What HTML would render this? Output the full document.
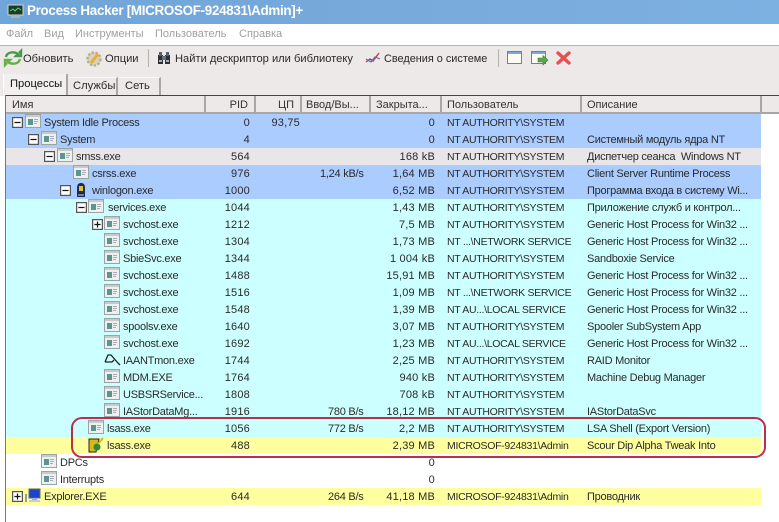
<!DOCTYPE html>
<html><head><meta charset="utf-8">
<style>
html,body{margin:0;padding:0;width:779px;height:522px;overflow:hidden;background:#fff}
body{position:relative;font-family:"Liberation Sans","Noto Sans CJK SC",sans-serif;font-size:11px;color:#2a2a2a}
.a{position:absolute;white-space:nowrap}
.r{position:absolute;left:6px;width:755px;height:17px}
.t{position:absolute;white-space:nowrap;line-height:18px;top:0;letter-spacing:.2px}
.t.n{font-size:11px;letter-spacing:-.25px}
.t.u{left:441px;font-size:10.5px;letter-spacing:-.3px}
.t.d{left:581px;font-size:11px;letter-spacing:-.25px}
.m{color:#a0a0a0;font-size:11px;line-height:15px;top:27px}
.b{font-size:11.15px;line-height:18px;top:50px}
.h{position:absolute;top:96px;height:17px;line-height:19px;background:#ece9e8;border-right:2px solid #a9a7a5;box-sizing:border-box;white-space:nowrap;color:#333;font-size:11px}
svg{position:absolute;overflow:visible}
</style></head><body>
<svg width="0" height="0" style="position:absolute"><defs>
<symbol id="w" viewBox="0 0 16 14"><rect x=".5" y=".5" width="15" height="13" fill="#eef0f0" stroke="#9aa4a4"/><rect x="1" y="1" width="14" height="2" fill="#c4cccc"/><rect x="3" y="5" width="5" height="6" fill="#5c9490"/><rect x="9" y="5" width="4" height="1" fill="#aab"/><rect x="9" y="7" width="4" height="1" fill="#aab"/><rect x="9" y="9" width="3" height="1" fill="#aab"/></symbol>
<symbol id="m" viewBox="0 0 9 9"><rect x=".5" y=".5" width="8" height="8" fill="#fff" stroke="#555"/><path d="M2 4.5H7" stroke="#111"/></symbol>
<symbol id="p" viewBox="0 0 9 9"><rect x=".5" y=".5" width="8" height="8" fill="#fff" stroke="#555"/><path d="M2 4.5H7M4.5 2V7" stroke="#111"/></symbol>
</defs></svg>

<!-- title bar -->
<div class="a" style="left:0;top:0;width:779px;height:24px;background:linear-gradient(90deg,#6fa5d8,#78aadb 50%,#7db1e2)"></div>
<svg style="left:7px;top:4px" width="17" height="15" viewBox="0 0 17 15"><rect x="1" y="1" width="15" height="10" fill="#1c3a28" stroke="#cfd6d8"/><path d="M3 7l3-2 2 2 3-3 3 2" stroke="#5fd06a" fill="none"/><rect x="4" y="11" width="9" height="3" fill="#aab4b8"/></svg>
<div class="a" style="left:27px;top:2px;line-height:18px;font-size:13.4px;letter-spacing:-.3px;font-weight:bold;color:#fff">Process Hacker [MICROSOF-924831\Admin]+</div>

<!-- menu -->
<div class="a" style="left:0;top:24px;width:779px;height:21px;background:#fff;border-bottom:1px solid #b5b5b3"></div>
<div class="a m" style="left:6px">Файл</div>
<div class="a m" style="left:44px">Вид</div>
<div class="a m" style="left:75px">Инструменты</div>
<div class="a m" style="left:155px">Пользователь</div>
<div class="a m" style="left:239px">Справка</div>

<!-- toolbar area -->
<div class="a" style="left:0;top:46px;width:779px;height:50px;background:#ece9e8"></div>
<svg style="left:4px;top:50px" width="18" height="16" viewBox="0 0 18 16"><path d="M2 7C3 2 10 1 14 4L12 6H17V1L15 3" fill="none" stroke="#4a9a4a" stroke-width="2.4"/><path d="M16 9C15 14 8 15 4 12L6 10H1V15L3 13" fill="none" stroke="#6ab04a" stroke-width="2.4"/></svg>
<div class="a b" style="left:23px">Обновить</div>
<svg style="left:85px;top:50px" width="18" height="18" viewBox="0 0 18 18"><circle cx="9" cy="9" r="6.5" fill="#d8d2c0" stroke="#b8ae90" stroke-width="2.4" stroke-dasharray="2.4 1.6"/><path d="M6 13L13 4" stroke="#e8b030" stroke-width="3"/></svg>
<div class="a b" style="left:105px">Опции</div>
<div class="a" style="left:148px;top:49px;width:1px;height:18px;background:#b4b2b0"></div>
<svg style="left:157px;top:51px" width="14" height="14" viewBox="0 0 14 14"><rect x="1" y="4" width="5" height="9" fill="#2c3038"/><rect x="8" y="4" width="5" height="9" fill="#2c3038"/><rect x="5" y="5" width="4" height="4" fill="#6a7078"/><rect x="2" y="1" width="3" height="4" fill="#5a6068"/><rect x="9" y="1" width="3" height="4" fill="#5a6068"/><rect x="2" y="9" width="3" height="2" fill="#a8b0b8"/><rect x="9" y="9" width="3" height="2" fill="#a8b0b8"/></svg>
<div class="a b" style="left:175px">Найти дескриптор или библиотеку</div>
<svg style="left:365px;top:51px" width="16" height="14" viewBox="0 0 16 14"><path d="M1 11L5 8 8 10 14 2" fill="none" stroke="#c83838" stroke-width="1.4"/><path d="M1 8L6 11 10 6 15 8" fill="none" stroke="#5070c0" stroke-width="1.2"/></svg>
<div class="a b" style="left:384px;font-size:10.9px">Сведения о системе</div>
<div class="a" style="left:498px;top:49px;width:1px;height:18px;background:#b4b2b0"></div>
<svg style="left:507px;top:51px" width="16" height="14" viewBox="0 0 16 14"><rect x=".5" y=".5" width="14" height="12" fill="#fcfcf4" stroke="#5c84b8"/><rect x="1" y="1" width="13" height="2" fill="#7fa6d4"/></svg>
<svg style="left:531px;top:51px" width="18" height="16" viewBox="0 0 18 16"><rect x=".5" y=".5" width="14" height="12" fill="#fcfcf4" stroke="#5c84b8"/><rect x="1" y="1" width="13" height="2" fill="#7fa6d4"/><path d="M7 7H12V4.5L17 9 12 14V11H7Z" fill="#5aa848" stroke="#3c7c30" stroke-width=".6"/></svg>
<svg style="left:556px;top:51px" width="15" height="14" viewBox="0 0 15 14"><path d="M2 2L13 12M13 2L2 12" stroke="#e85050" stroke-width="3.4" stroke-linecap="round"/></svg>

<!-- tabs -->
<div class="a" style="left:3px;top:74px;width:65px;height:21px;background:#f1f0ee;border-right:2px solid #a9a7a5;border-left:1px solid #fff;box-sizing:border-box;line-height:20px;padding-left:6px;color:#111;font-size:11.2px">Процессы</div>
<div class="a" style="left:69px;top:77px;width:49px;height:18px;background:#ece9e8;border-right:2px solid #a9a7a5;border-top:1px solid #fafafa;box-sizing:border-box;line-height:17px;padding-left:4px;font-size:11.2px">Службы</div>
<div class="a" style="left:119px;top:77px;width:42px;height:18px;background:#ece9e8;border-right:2px solid #a9a7a5;border-top:1px solid #fafafa;box-sizing:border-box;line-height:17px;padding-left:6px;font-size:11.2px">Сеть</div>

<!-- list frame -->
<div class="a" style="left:5px;top:95px;width:774px;height:1px;background:#444"></div>
<div class="a" style="left:5px;top:95px;width:1px;height:427px;background:#777"></div>

<!-- header -->
<div class="h" style="left:6px;width:200px;padding-left:6px">Имя</div>
<div class="h" style="left:206px;width:50px;text-align:right;padding-right:6px">PID</div>
<div class="h" style="left:256px;width:46px;text-align:right;padding-right:6px">ЦП</div>
<div class="h" style="left:302px;width:69px;padding-left:4px">Ввод/Вы...</div>
<div class="h" style="left:371px;width:71px;padding-left:5px">Закрыта...</div>
<div class="h" style="left:442px;width:140px;padding-left:5px">Пользователь</div>
<div class="h" style="left:582px;width:180px;padding-left:5px">Описание</div>
<div class="h" style="left:762px;width:17px;border-right:0"></div>
<div class="a" style="left:6px;top:112px;width:773px;height:2px;background:#a9a7a5"></div>

<!-- rows -->
<div class="r" style="top:114px;background:#aaccff"><svg style="left:6px;top:3px" width="11" height="11"><use href="#m"/></svg><svg style="left:19px;top:0" width="16" height="14"><use href="#w"/></svg><span class="t n" style="left:38px">System Idle Process</span><span class="t" style="right:511px">0</span><span class="t" style="right:461px">93,75</span><span class="t" style="right:326px">0</span><span class="t u">NT AUTHORITY\SYSTEM</span></div>
<div class="r" style="top:131px;background:#aaccff"><svg style="left:22px;top:3px" width="11" height="11"><use href="#m"/></svg><svg style="left:35px;top:0" width="16" height="14"><use href="#w"/></svg><span class="t n" style="left:54px">System</span><span class="t" style="right:511px">4</span><span class="t" style="right:326px">0</span><span class="t u">NT AUTHORITY\SYSTEM</span><span class="t d">Системный модуль ядра NT</span></div>
<div class="r" style="top:148px;background:#e8e6e8"><svg style="left:38px;top:3px" width="11" height="11"><use href="#m"/></svg><svg style="left:51px;top:0" width="16" height="14"><use href="#w"/></svg><span class="t n" style="left:70px">smss.exe</span><span class="t" style="right:511px">564</span><span class="t" style="right:326px">168 kB</span><span class="t u">NT AUTHORITY\SYSTEM</span><span class="t d">Диспетчер сеанса&nbsp; Windows NT</span></div>
<div class="r" style="top:165px;background:#aaccff"><svg style="left:67px;top:0" width="16" height="14"><use href="#w"/></svg><span class="t n" style="left:86px">csrss.exe</span><span class="t" style="right:511px">976</span><span class="t n" style="left:314px">1,24 kB/s</span><span class="t" style="right:326px">1,64 MB</span><span class="t u">NT AUTHORITY\SYSTEM</span><span class="t d">Client Server Runtime Process</span></div>
<div class="r" style="top:182px;background:#aaccff"><svg style="left:54px;top:3px" width="11" height="11"><use href="#m"/></svg><svg style="left:67px;top:0" width="16" height="16" viewBox="0 0 16 16"><path d="M4 15V6C4 2 6 1 8 1S12 2 12 6V15Z" fill="#1c2a50"/><path d="M6 4H10V9H6Z" fill="#e0c040"/><path d="M5 13H11" stroke="#c8d0e0"/></svg><span class="t n" style="left:86px">winlogon.exe</span><span class="t" style="right:511px">1000</span><span class="t" style="right:326px">6,52 MB</span><span class="t u">NT AUTHORITY\SYSTEM</span><span class="t d">Программа входа в систему Wi...</span></div>
<div class="r" style="top:199px;background:#ccffff"><svg style="left:70px;top:3px" width="11" height="11"><use href="#m"/></svg><svg style="left:82px;top:0" width="16" height="14"><use href="#w"/></svg><span class="t n" style="left:102px">services.exe</span><span class="t" style="right:511px">1044</span><span class="t" style="right:326px">1,43 MB</span><span class="t u">NT AUTHORITY\SYSTEM</span><span class="t d">Приложение служб и контрол...</span></div>
<div class="r" style="top:216px;background:#ccffff"><svg style="left:86px;top:3px" width="11" height="11"><use href="#p"/></svg><svg style="left:98px;top:0" width="16" height="14"><use href="#w"/></svg><span class="t n" style="left:117px">svchost.exe</span><span class="t" style="right:511px">1212</span><span class="t" style="right:326px">7,5 MB</span><span class="t u">NT AUTHORITY\SYSTEM</span><span class="t d">Generic Host Process for Win32 ...</span></div>
<div class="r" style="top:233px;background:#ccffff"><svg style="left:98px;top:0" width="16" height="14"><use href="#w"/></svg><span class="t n" style="left:117px">svchost.exe</span><span class="t" style="right:511px">1304</span><span class="t" style="right:326px">1,73 MB</span><span class="t u">NT ...\NETWORK SERVICE</span><span class="t d">Generic Host Process for Win32 ...</span></div>
<div class="r" style="top:250px;background:#ccffff"><svg style="left:98px;top:0" width="16" height="14"><use href="#w"/></svg><span class="t n" style="left:117px">SbieSvc.exe</span><span class="t" style="right:511px">1344</span><span class="t" style="right:326px">1 004 kB</span><span class="t u">NT AUTHORITY\SYSTEM</span><span class="t d">Sandboxie Service</span></div>
<div class="r" style="top:267px;background:#ccffff"><svg style="left:98px;top:0" width="16" height="14"><use href="#w"/></svg><span class="t n" style="left:117px">svchost.exe</span><span class="t" style="right:511px">1488</span><span class="t" style="right:326px">15,91 MB</span><span class="t u">NT AUTHORITY\SYSTEM</span><span class="t d">Generic Host Process for Win32 ...</span></div>
<div class="r" style="top:284px;background:#ccffff"><svg style="left:98px;top:0" width="16" height="14"><use href="#w"/></svg><span class="t n" style="left:117px">svchost.exe</span><span class="t" style="right:511px">1516</span><span class="t" style="right:326px">1,09 MB</span><span class="t u">NT ...\NETWORK SERVICE</span><span class="t d">Generic Host Process for Win32 ...</span></div>
<div class="r" style="top:301px;background:#ccffff"><svg style="left:98px;top:0" width="16" height="14"><use href="#w"/></svg><span class="t n" style="left:117px">svchost.exe</span><span class="t" style="right:511px">1548</span><span class="t" style="right:326px">1,39 MB</span><span class="t u">NT AU...\LOCAL SERVICE</span><span class="t d">Generic Host Process for Win32 ...</span></div>
<div class="r" style="top:318px;background:#ccffff"><svg style="left:98px;top:0" width="16" height="14"><use href="#w"/></svg><span class="t n" style="left:117px">spoolsv.exe</span><span class="t" style="right:511px">1640</span><span class="t" style="right:326px">3,07 MB</span><span class="t u">NT AUTHORITY\SYSTEM</span><span class="t d">Spooler SubSystem App</span></div>
<div class="r" style="top:335px;background:#ccffff"><svg style="left:98px;top:0" width="16" height="14"><use href="#w"/></svg><span class="t n" style="left:117px">svchost.exe</span><span class="t" style="right:511px">1692</span><span class="t" style="right:326px">1,23 MB</span><span class="t u">NT AU...\LOCAL SERVICE</span><span class="t d">Generic Host Process for Win32 ...</span></div>
<div class="r" style="top:352px;background:#ccffff"><svg style="left:98px;top:1px" width="16" height="14" viewBox="0 0 16 14"><path d="M1 9L4 2H7L14 10 16 12M1 9H8L10 7" fill="none" stroke="#222" stroke-width="1.3"/></svg><span class="t n" style="left:117px">IAANTmon.exe</span><span class="t" style="right:511px">1744</span><span class="t" style="right:326px">2,25 MB</span><span class="t u">NT AUTHORITY\SYSTEM</span><span class="t d">RAID Monitor</span></div>
<div class="r" style="top:369px;background:#ccffff"><svg style="left:98px;top:0" width="16" height="14"><use href="#w"/></svg><span class="t n" style="left:117px">MDM.EXE</span><span class="t" style="right:511px">1764</span><span class="t" style="right:326px">940 kB</span><span class="t u">NT AUTHORITY\SYSTEM</span><span class="t d">Machine Debug Manager</span></div>
<div class="r" style="top:386px;background:#ccffff"><svg style="left:98px;top:0" width="16" height="14"><use href="#w"/></svg><span class="t n" style="left:117px">USBSRService...</span><span class="t" style="right:511px">1808</span><span class="t" style="right:326px">708 kB</span><span class="t u">NT AUTHORITY\SYSTEM</span></div>
<div class="r" style="top:403px;background:#ccffff"><svg style="left:98px;top:0" width="16" height="14"><use href="#w"/></svg><span class="t n" style="left:117px">IAStorDataMg...</span><span class="t" style="right:511px">1916</span><span class="t n" style="left:322px">780 B/s</span><span class="t" style="right:326px">18,12 MB</span><span class="t u">NT AUTHORITY\SYSTEM</span><span class="t d">IAStorDataSvc</span></div>
<div class="r" style="top:420px;background:#ccffff"><svg style="left:82px;top:0" width="16" height="14"><use href="#w"/></svg><span class="t n" style="left:101px">lsass.exe</span><span class="t" style="right:511px">1056</span><span class="t n" style="left:322px">772 B/s</span><span class="t" style="right:326px">2,2 MB</span><span class="t u">NT AUTHORITY\SYSTEM</span><span class="t d">LSA Shell (Export Version)</span></div>
<div class="r" style="top:437px;background:#ffffa0"><svg style="left:82px;top:0" width="16" height="16" viewBox="0 0 16 16"><path d="M1 2H11L8 15H1Z" fill="#d8b820" stroke="#222"/><circle cx="9" cy="10" r="3.5" fill="#2c8a3c"/><path d="M10 7L15 1" stroke="#c8c020" stroke-width="2"/></svg><span class="t n" style="left:101px">lsass.exe</span><span class="t" style="right:511px">488</span><span class="t" style="right:326px">2,39 MB</span><span class="t u">MICROSOF-924831\Admin</span><span class="t d">Scour Dip Alpha Tweak Into</span></div>
<div class="r" style="top:454px;background:#fff"><svg style="left:35px;top:0" width="16" height="14"><use href="#w"/></svg><span class="t n" style="left:54px">DPCs</span><span class="t" style="right:326px">0</span></div>
<div class="r" style="top:471px;background:#fff"><svg style="left:35px;top:0" width="16" height="14"><use href="#w"/></svg><span class="t n" style="left:54px">Interrupts</span><span class="t" style="right:326px">0</span></div>
<div class="r" style="top:488px;background:#ffffa0"><svg style="left:6px;top:3px" width="11" height="11"><use href="#p"/></svg><svg style="left:18px;top:0" width="17" height="16" viewBox="0 0 17 16"><rect x="5" y="1" width="11" height="9" fill="#1c44c8" stroke="#667"/><rect x="8" y="10" width="5" height="2" fill="#aab"/><rect x="5" y="12" width="11" height="2" fill="#c8ccd0"/><rect x="1" y="6" width="2" height="8" fill="#99a"/></svg><span class="t n" style="left:38px">Explorer.EXE</span><span class="t" style="right:511px">644</span><span class="t n" style="left:322px">264 B/s</span><span class="t" style="right:326px">41,18 MB</span><span class="t u">MICROSOF-924831\Admin</span><span class="t d">Проводник</span></div>

<!-- red highlight -->
<div class="a" style="left:71px;top:417px;width:691px;height:37px;border:2px solid #b8304a;border-radius:11px;box-sizing:content-box"></div>
</body></html>
